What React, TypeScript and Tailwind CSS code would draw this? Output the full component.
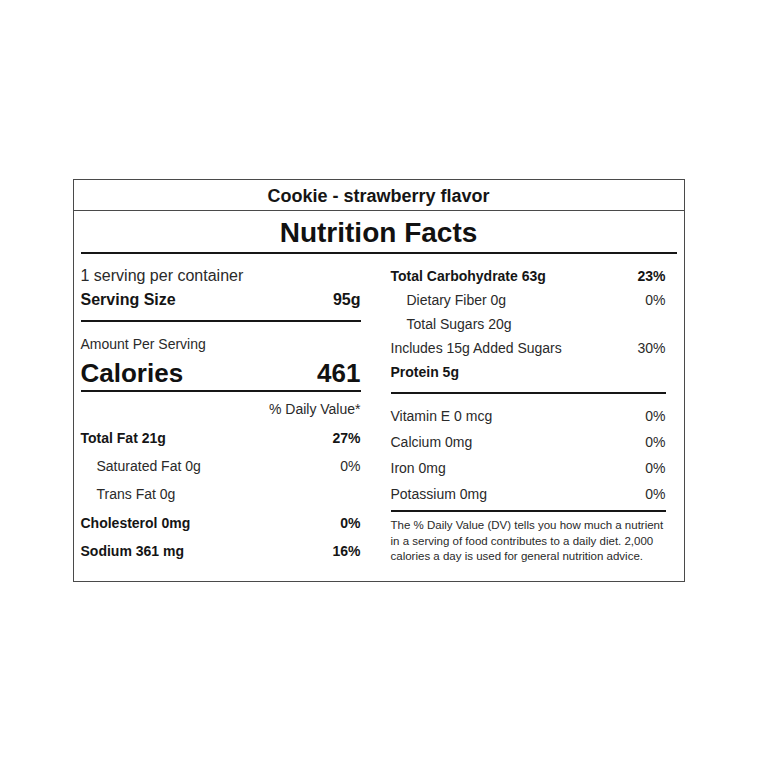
const font = { fontFamily: '"Liberation Sans", Arial, sans-serif' };

type Row = { label: string; value?: string; bold?: boolean; indent?: boolean; h: string };

const Line = ({ className = "" }: { className?: string }) => (
  <div className={`h-[2px] bg-[#161616] ${className}`} />
);

const NutrientRow = ({ label, value, bold, indent, h }: Row) => (
  <div className={`flex items-center justify-between ${h} text-[14px] ${bold ? "font-bold text-[#151515]" : "text-[#2a2a2a]"}`}>
    <span className={indent ? "pl-4" : ""}>{label}</span>
    {value && <span>{value}</span>}
  </div>
);

export default function App() {
  return (
    <div className="flex min-h-[757px] w-full justify-center bg-white pt-[179px]" style={font}>
      <div className="h-fit w-[612px] border border-[#4a4a4a] bg-white">
        {/* product name */}
        <div className="flex h-[31px] items-center justify-center border-b border-[#4a4a4a] pt-[2px] text-[18px] font-bold text-[#151515]">
          Cookie - strawberry flavor
        </div>

        {/* title */}
        <div className="flex h-[41px] items-center justify-center pt-[2px] text-[28px] font-bold text-[#111]">
          Nutrition Facts
        </div>
        <Line className="mx-[7px]" />

        <div className="flex gap-[30px] pl-[7px] pr-[17px] pt-[10px] pb-[16px]">
          {/* left column */}
          <div className="flex w-[280px] flex-col">
            <div className="flex h-[24px] items-center text-[16px] text-[#2a2a2a]">1 serving per container</div>
            <div className="flex h-[24px] items-center justify-between text-[16px] font-bold text-[#151515]">
              <span>Serving Size</span>
              <span>95g</span>
            </div>
            <Line className="mt-[8px]" />
            <div className="mt-[10px] flex h-[24px] items-center text-[14px] text-[#2a2a2a]">Amount Per Serving</div>
            <div className="flex h-[34px] items-center justify-between text-[26px] font-bold text-[#111]">
              <span>Calories</span>
              <span>461</span>
            </div>
            <Line />
            <div className="mt-[5px] mb-[3px] flex h-[24px] items-center justify-end text-[14px] text-[#2a2a2a]">% Daily Value*</div>
            <NutrientRow h="h-[28px]" label="Total Fat 21g" value="27%" bold />
            <NutrientRow h="h-[28px]" label="Saturated Fat 0g" value="0%" indent />
            <NutrientRow h="h-[29px]" label="Trans Fat 0g" indent />
            <NutrientRow h="h-[28px]" label="Cholesterol 0mg" value="0%" bold />
            <NutrientRow h="h-[28px]" label="Sodium 361 mg" value="16%" bold />
          </div>

          {/* right column */}
          <div className="flex w-[275px] flex-col">
            <NutrientRow h="h-[24px]" label="Total Carbohydrate 63g" value="23%" bold />
            <NutrientRow h="h-[24px]" label="Dietary Fiber 0g" value="0%" indent />
            <NutrientRow h="h-[24px]" label="Total Sugars 20g" indent />
            <NutrientRow h="h-[24px]" label="Includes 15g Added Sugars" value="30%" />
            <NutrientRow h="h-[24px]" label="Protein 5g" bold />
            <Line className="mt-[8px]" />
            <div className="mt-[9px]">
              <NutrientRow h="h-[26px]" label="Vitamin E 0 mcg" value="0%" />
              <NutrientRow h="h-[26px]" label="Calcium 0mg" value="0%" />
              <NutrientRow h="h-[26px]" label="Iron 0mg" value="0%" />
              <NutrientRow h="h-[26px]" label="Potassium 0mg" value="0%" />
            </div>
            <Line className="mt-[3px]" />
            <p className="mt-[6px] text-[11.5px] leading-[15.5px] text-[#2a2a2a]">
              The % Daily Value (DV) tells you how much a nutrient in a serving of food contributes to a daily diet. 2,000 calories a day is used for general nutrition advice.
            </p>
          </div>
        </div>
      </div>
    </div>
  );
}
